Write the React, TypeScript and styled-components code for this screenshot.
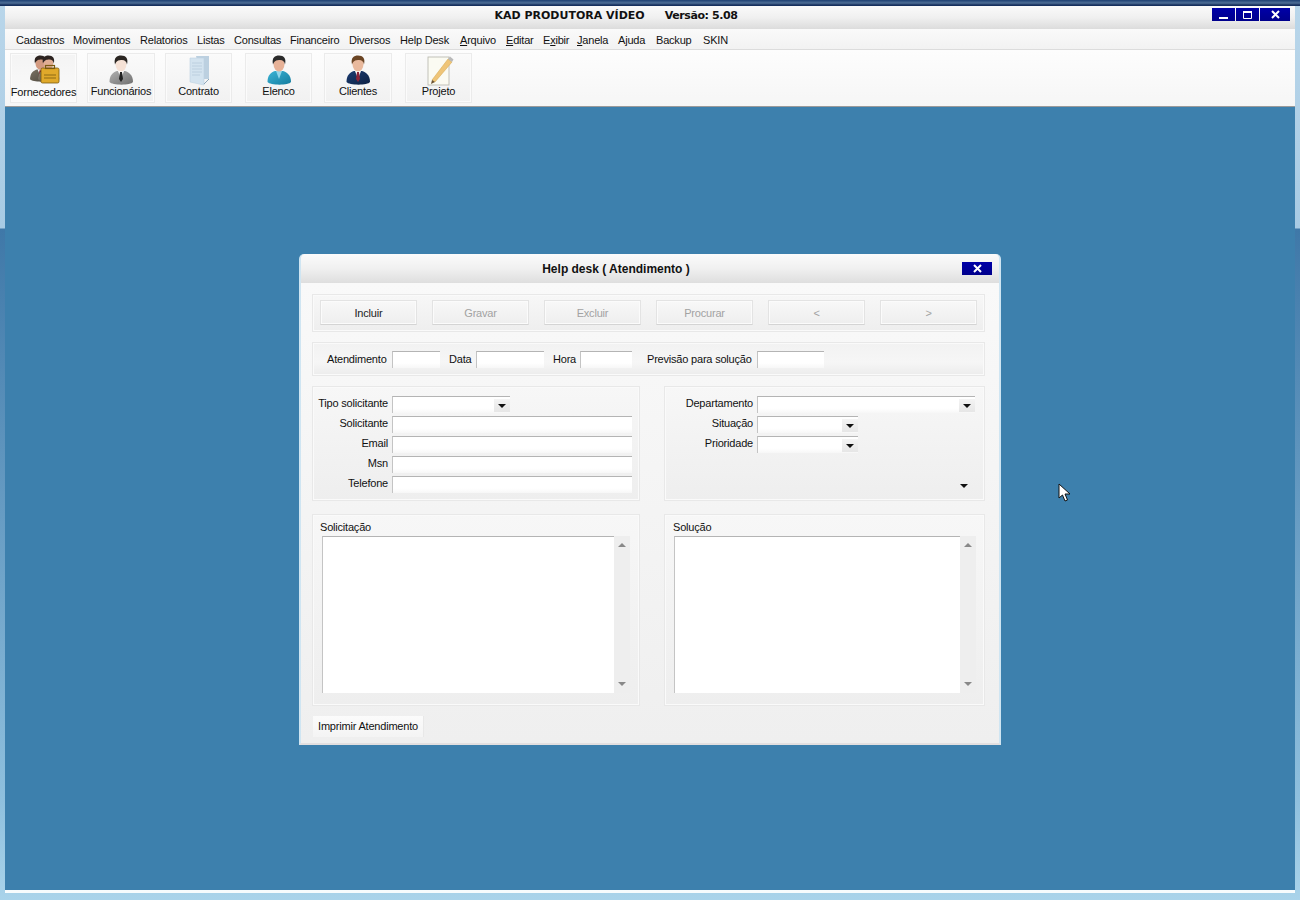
import React from 'react'
import styled, { createGlobalStyle } from 'styled-components'

const GlobalStyle = createGlobalStyle`
    html, body {
        margin: 0;
        padding: 0;
        width: 1300px;
        height: 900px;
        overflow: hidden;
        font-family: 'Liberation Sans', Arial, sans-serif;
        font-size: 11px;
        letter-spacing: -0.2px;
        color: #111;
    }
`

const Frame = styled.div`
    width: 1300px;
    height: 900px;
    box-sizing: border-box;
    padding: 6px 5px 7px 5px;
    display: flex;
    flex-direction: column;
    background:
        linear-gradient(to bottom, #1d3f72 0, #4f6f96 3px, #17305e 5px, #17305e 6px, transparent 6px),
        linear-gradient(to bottom, #b9d6ea 0, #a8cbe4 228px, #3f78a8 229px, #8fc0de 800px, #a9d3ea 900px);
`

const TitleBar = styled.div`
    height: 23px;
    position: relative;
    box-sizing: border-box;
    display: flex;
    justify-content: center;
    align-items: center;
    gap: 20px;
    padding: 0 68px 5px 0;
    font-family: 'DejaVu Sans', sans-serif;
    font-size: 11px;
    font-weight: bold;
    letter-spacing: 0;
    color: #111;
    background: linear-gradient(to bottom, #fafafa 0%, #f0f0f0 50%, #dcdcdc 100%);
`

const Version = styled.span`
    letter-spacing: -0.4px;
`

const WindowButtons = styled.div`
    position: absolute;
    right: 5px;
    top: 2px;
    display: flex;
    gap: 1px;
`

const WinButton = styled.div<{ $w: number }>`
    width: ${p => p.$w}px;
    height: 13px;
    display: flex;
    align-items: center;
    justify-content: center;
    background: linear-gradient(to bottom, #0000a8, #00008c);
`

const MenuBar = styled.div`
    height: 21px;
    display: flex;
    align-items: center;
    padding: 2px 0 0 11px;
    background: linear-gradient(to bottom, #fafafa, #f2f2f2);
    border-bottom: 1px solid #dcdcdc;
    box-sizing: border-box;
`

const MenuItem = styled.span<{ $w: number }>`
    width: ${p => p.$w}px;
    flex: none;
    white-space: nowrap;
    u {
        text-underline-offset: 1px;
    }
`

const ToolBar = styled.div`
    height: 57px;
    box-sizing: border-box;
    display: flex;
    padding: 3px 0 0 5px;
    background: linear-gradient(to bottom, #fdfdfd, #f6f6f6);
    border-bottom: 1px solid #9a9a9a;
`

const ToolButton = styled.div<{ $w: number; $gap: number; $active?: boolean }>`
    width: ${p => p.$w}px;
    height: 50px;
    margin-right: ${p => p.$gap}px;
    box-sizing: border-box;
    display: flex;
    flex-direction: column;
    align-items: center;
    border: 1px solid #ebebeb;
    box-shadow: inset 0 0 0 1px #fbfbfb;
    background: ${p => (p.$active ? 'linear-gradient(to bottom, #f4f4f4, #fafafa)' : 'linear-gradient(to bottom, #fafafa, #f1f1f1)')};
    white-space: nowrap;
    svg {
        flex: none;
        margin-top: 1px;
    }
`

const ToolLabel = styled.span<{ $active?: boolean }>`
    margin-top: ${p => (p.$active ? 1 : -1)}px;
`

const Desktop = styled.div`
    flex: 1;
    position: relative;
    background: #3d80ad;
    border-bottom: 3px solid #f6fbfd;
`

const Dialog = styled.div`
    position: absolute;
    left: 294px;
    top: 147px;
    width: 702px;
    height: 491px;
    box-sizing: border-box;
    background: #f2f2f2;
    border-radius: 5px 5px 0 0;
    border-left: 2px solid #cfe5f2;
    border-right: 2px solid #cfe5f2;
    border-bottom: 2px solid #e2dfe0;
    display: flex;
    flex-direction: column;
`

const DialogTitle = styled.div`
    height: 29px;
    flex: none;
    box-sizing: border-box;
    position: relative;
    display: flex;
    align-items: center;
    justify-content: center;
    padding-right: 68px;
    font-size: 12px;
    font-weight: bold;
    letter-spacing: 0;
    background: linear-gradient(to bottom, #fbfbfb 0%, #f0f0f0 50%, #dedede 100%);
    border-radius: 5px 5px 0 0;
`

const DialogClose = styled(WinButton)`
    position: absolute;
    right: 7px;
    top: 8px;
`

const DialogBody = styled.div`
    flex: 1;
    padding: 11px 14px 0 11px;
    display: flex;
    flex-direction: column;
    background: linear-gradient(to bottom, #f9f9f9, #efefef);
`

const Panel = styled.div`
    box-sizing: border-box;
    border: 1px solid #e8e8e8;
    box-shadow: inset 0 0 0 1px #fafafa;
    background: linear-gradient(to bottom, #f7f7f7, #eeeeee);
`

const ActionPanel = styled(Panel)`
    height: 38px;
    display: flex;
    gap: 15px;
    padding: 5px 0 0 7px;
`

const ActionButton = styled.div<{ $disabled?: boolean }>`
    width: 97px;
    height: 25px;
    box-sizing: border-box;
    display: flex;
    align-items: center;
    justify-content: center;
    border: 1px solid #e3e3e3;
    border-bottom-color: #d4d4d4;
    box-shadow: inset 0 0 0 1px #fbfbfb;
    background: linear-gradient(to bottom, #f8f8f8, #eeeeee);
    color: ${p => (p.$disabled ? '#a2a2a2' : '#222')};
`

const InfoPanel = styled(Panel)`
    height: 34px;
    margin-top: 10px;
    display: flex;
    align-items: center;
    padding-left: 14px;
    background: linear-gradient(to bottom, #f2f2f2, #f6f6f6 60%, #ececec);
`

const InfoLabel = styled.span<{ $left: number; $w: number }>`
    margin-left: ${p => p.$left}px;
    width: ${p => p.$w}px;
    flex: none;
    white-space: nowrap;
`

const TextInput = styled.div<{ $w?: number }>`
    width: ${p => (p.$w ? `${p.$w}px` : 'auto')};
    flex: ${p => (p.$w ? 'none' : '1')};
    height: 17px;
    box-sizing: border-box;
    position: relative;
    border-top: 1px solid #b4b4b4;
    border-left: 1px solid #c4c4c4;
    background: linear-gradient(to bottom, #ffffff 70%, #f7f7f7);
`

const ComboArrow = styled.div`
    position: absolute;
    right: 0;
    top: 2px;
    width: 16px;
    height: 13px;
    display: flex;
    align-items: center;
    justify-content: center;
    background: linear-gradient(to bottom, #f4f4f4, #e6e6e6);
    &::after {
        content: '';
        border-left: 4px solid transparent;
        border-right: 4px solid transparent;
        border-top: 4px solid #111;
    }
`

const Columns = styled.div`
    display: grid;
    grid-template-columns: 328px 321px;
    column-gap: 24px;
`

const FormPanel = styled(Panel)`
    height: 115px;
    margin-top: 10px;
    position: relative;
    padding-top: 9px;
    display: flex;
    flex-direction: column;
    gap: 3px;
`

const FormRow = styled.div<{ $labelW: number; $right: number }>`
    height: 17px;
    display: flex;
    align-items: center;
    padding-right: ${p => p.$right}px;
    span {
        width: ${p => p.$labelW}px;
        flex: none;
        text-align: right;
        padding: 0 4px 3px 0;
        box-sizing: border-box;
        white-space: nowrap;
    }
`

const LooseArrow = styled.div`
    position: absolute;
    right: 16px;
    bottom: 12px;
    border-left: 4px solid transparent;
    border-right: 4px solid transparent;
    border-top: 4px solid #111;
`

const TextPanel = styled(Panel)`
    height: 192px;
    margin-top: 13px;
    padding: 5px 0 0 7px;
`

const PanelCaption = styled.div<{ $left: number }>`
    height: 16px;
    line-height: 14px;
    padding-left: ${p => p.$left}px;
`

const MemoBox = styled.div<{ $left: number; $w: number }>`
    margin-left: ${p => p.$left}px;
    width: ${p => p.$w}px;
    height: 157px;
    display: flex;
`

const Memo = styled.div`
    flex: 1;
    box-sizing: border-box;
    background: #fff;
    border-top: 1px solid #b4b4b4;
    border-left: 1px solid #c4c4c4;
`

const ScrollTrack = styled.div`
    width: 16px;
    flex: none;
    display: flex;
    flex-direction: column;
    justify-content: space-between;
    align-items: center;
    padding: 7px 0 7px;
    box-sizing: border-box;
    background: #eeeeee;
`

const ScrollUp = styled.div`
    border-left: 4px solid transparent;
    border-right: 4px solid transparent;
    border-bottom: 4px solid #888;
`

const ScrollDown = styled.div`
    border-left: 4px solid transparent;
    border-right: 4px solid transparent;
    border-top: 4px solid #888;
`

const PrintButton = styled.div`
    width: 111px;
    height: 21px;
    margin: 10px 0 0 1px;
    padding-bottom: 2px;
    box-sizing: border-box;
    display: flex;
    align-items: center;
    justify-content: center;
    white-space: nowrap;
    background: linear-gradient(to bottom, #fbfbfb, #f4f4f4);
    border-right: 1px solid #e8e8e8;
`

const Cursor = styled.svg`
    position: absolute;
    left: 1053px;
    top: 376px;
`

const CloseIcon = () => (
    <svg width="9" height="9" viewBox="0 0 9 9">
        <path d="M1 1 L8 8 M8 1 L1 8" stroke="#fff" strokeWidth="2" />
    </svg>
)

// narrow bust, head sits high and the shoulders run to the bottom of the icon
const Person = ({ id, skin = '#f1c9b4', hair = '#2c2320', suit, suitDark, shirt = '#fff', tie }: { id: string; skin?: string; hair?: string; suit: string; suitDark: string; shirt?: string; tie?: string }) => (
    <g>
        <defs>
            <linearGradient id={id} x1="0" y1="0" x2="1" y2="1">
                <stop offset="0" stopColor={suit} />
                <stop offset="1" stopColor={suitDark} />
            </linearGradient>
        </defs>
        <path d="M4.5 27 C4.5 20 8 17.5 12 16 L20 16 C24 17.5 28 20 28 27 C26 30.5 7 30.5 4.5 27 Z" fill={`url(#${id})`} />
        <path d="M13 16 L19 16 L16 24 Z" fill={shirt} />
        {tie && <path d="M15 17 L17 17 L18 24 L16 27 L14 24 Z" fill={tie} />}
        <ellipse cx="16" cy="9" rx="5.5" ry="7.5" fill={skin} />
        <path d="M10 9.5 C8.5 2.5 12 0.5 16 0.5 C21 0.5 23.5 3.5 22 9.5 C21.5 6.5 20 5 17 5 C14 5 11.5 5.5 10 9.5 Z" fill={hair} />
    </g>
)

const FornecedoresIcon = () => (
    <svg width="34" height="30" viewBox="0 0 34 30">
        <g transform="translate(-1 0) scale(0.9)">
            <Person id="fa" suit="#7a7264" suitDark="#4c463c" skin="#d39a80" tie="#7a1d1d" />
        </g>
        <g transform="translate(7 0) scale(0.9)">
            <Person id="fb" suit="#8a8374" suitDark="#5a5347" skin="#e0ad93" tie="#333" />
        </g>
        <rect x="14" y="13" width="18" height="15" rx="1.5" fill="#e0a92a" stroke="#7a5a10" strokeWidth="0.8" />
        <rect x="18.5" y="10.5" width="9" height="3" fill="none" stroke="#7a5a10" strokeWidth="1.2" />
        <path d="M17 20 H29 M17 23 H29" stroke="#8d6a15" strokeWidth="1" />
    </svg>
)

const FuncionariosIcon = () => (
    <svg width="32" height="31" viewBox="0 0 32 31">
        <Person id="fu" suit="#b0b0b0" suitDark="#6f6f6f" hair="#2b2622" tie="#222" skin="#f6e2d6" />
    </svg>
)

const ContratoIcon = () => (
    <svg width="28" height="31" viewBox="0 0 28 31">
        <path d="M11 1 H24 V24 H17 Z" fill="#bcd0e0" />
        <path d="M5 3 H19 V30 L5 27 Z" fill="#d3e3ef" stroke="#bdd1e0" strokeWidth="0.6" />
        <path d="M7 8 H17 M7 11 H17 M7 14 H17 M7 17 H17 M7 20 H15" stroke="#bccfdf" strokeWidth="1" />
        <path d="M24 24 L19 29" stroke="#8ea6b8" strokeWidth="1" />
    </svg>
)

const ElencoIcon = () => (
    <svg width="32" height="31" viewBox="0 0 32 31">
        <Person id="el" suit="#3bb4d6" suitDark="#157d9f" hair="#2a2a2a" shirt="#8fd6ea" skin="#e7b298" />
    </svg>
)

const ClientesIcon = () => (
    <svg width="32" height="31" viewBox="0 0 32 31">
        <Person id="cl" suit="#1b3c72" suitDark="#0d2144" hair="#6b4524" tie="#8a2338" skin="#e9b99d" />
    </svg>
)

const ProjetoIcon = () => (
    <svg width="32" height="31" viewBox="0 0 32 31">
        <rect x="5" y="2" width="21" height="28" fill="#fbfbf2" stroke="#b4b4aa" strokeWidth="0.8" />
        <path d="M9 25 L25 4 L29 7 L12 27 Z" fill="#efc577" stroke="#d2a548" strokeWidth="0.5" />
        <path d="M25 4 L27 1.5 L30.5 4.5 L29 7 Z" fill="#b9b9b9" />
        <path d="M9 25 L8 29 L12 27 Z" fill="#6a5130" />
    </svg>
)

const tools = [
    { label: 'Fornecedores', w: 67, gap: 10, icon: <FornecedoresIcon />, active: true },
    { label: 'Funcionários', w: 68, gap: 10, icon: <FuncionariosIcon /> },
    { label: 'Contrato', w: 67, gap: 13, icon: <ContratoIcon /> },
    { label: 'Elenco', w: 67, gap: 12, icon: <ElencoIcon /> },
    { label: 'Clientes', w: 68, gap: 13, icon: <ClientesIcon /> },
    { label: 'Projeto', w: 67, gap: 0, icon: <ProjetoIcon /> },
]

const menus: { w: number; label: React.ReactNode }[] = [
    { w: 57, label: 'Cadastros' },
    { w: 67, label: 'Movimentos' },
    { w: 57, label: 'Relatorios' },
    { w: 37, label: 'Listas' },
    { w: 56, label: 'Consultas' },
    { w: 59, label: 'Financeiro' },
    { w: 51, label: 'Diversos' },
    { w: 60, label: 'Help Desk' },
    { w: 46, label: <><u>A</u>rquivo</> },
    { w: 37, label: <><u>E</u>ditar</> },
    { w: 34, label: <>E<u>x</u>ibir</> },
    { w: 41, label: <><u>J</u>anela</> },
    { w: 38, label: 'Ajuda' },
    { w: 47, label: 'Backup' },
    { w: 30, label: 'SKIN' },
]

const App = () => {
    return (
        <Frame>
            <GlobalStyle />
            <TitleBar>
                <span>KAD PRODUTORA VÍDEO</span>
                <Version>Versão: 5.08</Version>
                <WindowButtons>
                    <WinButton $w={23}>
                        <svg width="9" height="9" viewBox="0 0 9 9"><rect x="0" y="7" width="9" height="2" fill="#fff" /></svg>
                    </WinButton>
                    <WinButton $w={23}>
                        <svg width="9" height="9" viewBox="0 0 9 9"><path d="M0.5 1.5 H8.5 V8.5 H0.5 Z" fill="none" stroke="#fff" /><rect x="0" y="1" width="9" height="2" fill="#fff" /></svg>
                    </WinButton>
                    <WinButton $w={30}><CloseIcon /></WinButton>
                </WindowButtons>
            </TitleBar>
            <MenuBar>
                {menus.map((m, i) => <MenuItem key={i} $w={m.w}>{m.label}</MenuItem>)}
            </MenuBar>
            <ToolBar>
                {tools.map(t => (
                    <ToolButton key={t.label} $w={t.w} $gap={t.gap} $active={t.active}>
                        {t.icon}
                        <ToolLabel $active={t.active}>{t.label}</ToolLabel>
                    </ToolButton>
                ))}
            </ToolBar>
            <Desktop>
                <Dialog>
                    <DialogTitle>
                        Help desk ( Atendimento )
                        <DialogClose $w={30}><CloseIcon /></DialogClose>
                    </DialogTitle>
                    <DialogBody>
                        <ActionPanel>
                            <ActionButton>Incluir</ActionButton>
                            <ActionButton $disabled>Gravar</ActionButton>
                            <ActionButton $disabled>Excluir</ActionButton>
                            <ActionButton $disabled>Procurar</ActionButton>
                            <ActionButton $disabled>&lt;</ActionButton>
                            <ActionButton $disabled>&gt;</ActionButton>
                        </ActionPanel>
                        <InfoPanel>
                            <InfoLabel $left={0} $w={65}>Atendimento</InfoLabel>
                            <TextInput $w={48} />
                            <InfoLabel $left={9} $w={27}>Data</InfoLabel>
                            <TextInput $w={68} />
                            <InfoLabel $left={9} $w={27}>Hora</InfoLabel>
                            <TextInput $w={52} />
                            <InfoLabel $left={15} $w={110}>Previsão para solução</InfoLabel>
                            <TextInput $w={67} />
                        </InfoPanel>
                        <Columns>
                            <FormPanel>
                                <FormRow $labelW={79} $right={7}><span>Tipo solicitante</span><TextInput $w={118}><ComboArrow /></TextInput></FormRow>
                                <FormRow $labelW={79} $right={7}><span>Solicitante</span><TextInput /></FormRow>
                                <FormRow $labelW={79} $right={7}><span>Email</span><TextInput /></FormRow>
                                <FormRow $labelW={79} $right={7}><span>Msn</span><TextInput /></FormRow>
                                <FormRow $labelW={79} $right={7}><span>Telefone</span><TextInput /></FormRow>
                            </FormPanel>
                            <FormPanel>
                                <FormRow $labelW={92} $right={9}><span>Departamento</span><TextInput><ComboArrow /></TextInput></FormRow>
                                <FormRow $labelW={92} $right={9}><span>Situação</span><TextInput $w={101}><ComboArrow /></TextInput></FormRow>
                                <FormRow $labelW={92} $right={9}><span>Prioridade</span><TextInput $w={101}><ComboArrow /></TextInput></FormRow>
                                <LooseArrow />
                            </FormPanel>
                        </Columns>
                        <Columns>
                            <TextPanel>
                                <PanelCaption $left={0}>Solicitação</PanelCaption>
                                <MemoBox $left={2} $w={308}>
                                    <Memo />
                                    <ScrollTrack><ScrollUp /><ScrollDown /></ScrollTrack>
                                </MemoBox>
                            </TextPanel>
                            <TextPanel>
                                <PanelCaption $left={1}>Solução</PanelCaption>
                                <MemoBox $left={2} $w={302}>
                                    <Memo />
                                    <ScrollTrack><ScrollUp /><ScrollDown /></ScrollTrack>
                                </MemoBox>
                            </TextPanel>
                        </Columns>
                        <PrintButton>Imprimir Atendimento</PrintButton>
                    </DialogBody>
                </Dialog>
                <Cursor width="14" height="20" viewBox="0 0 14 20">
                    <path d="M1 1 L1 15 L4.5 12 L7 18 L9.5 17 L7 11 L12 11 Z" fill="#fff" stroke="#111" strokeWidth="1" />
                </Cursor>
            </Desktop>
        </Frame>
    )
}

export default App
